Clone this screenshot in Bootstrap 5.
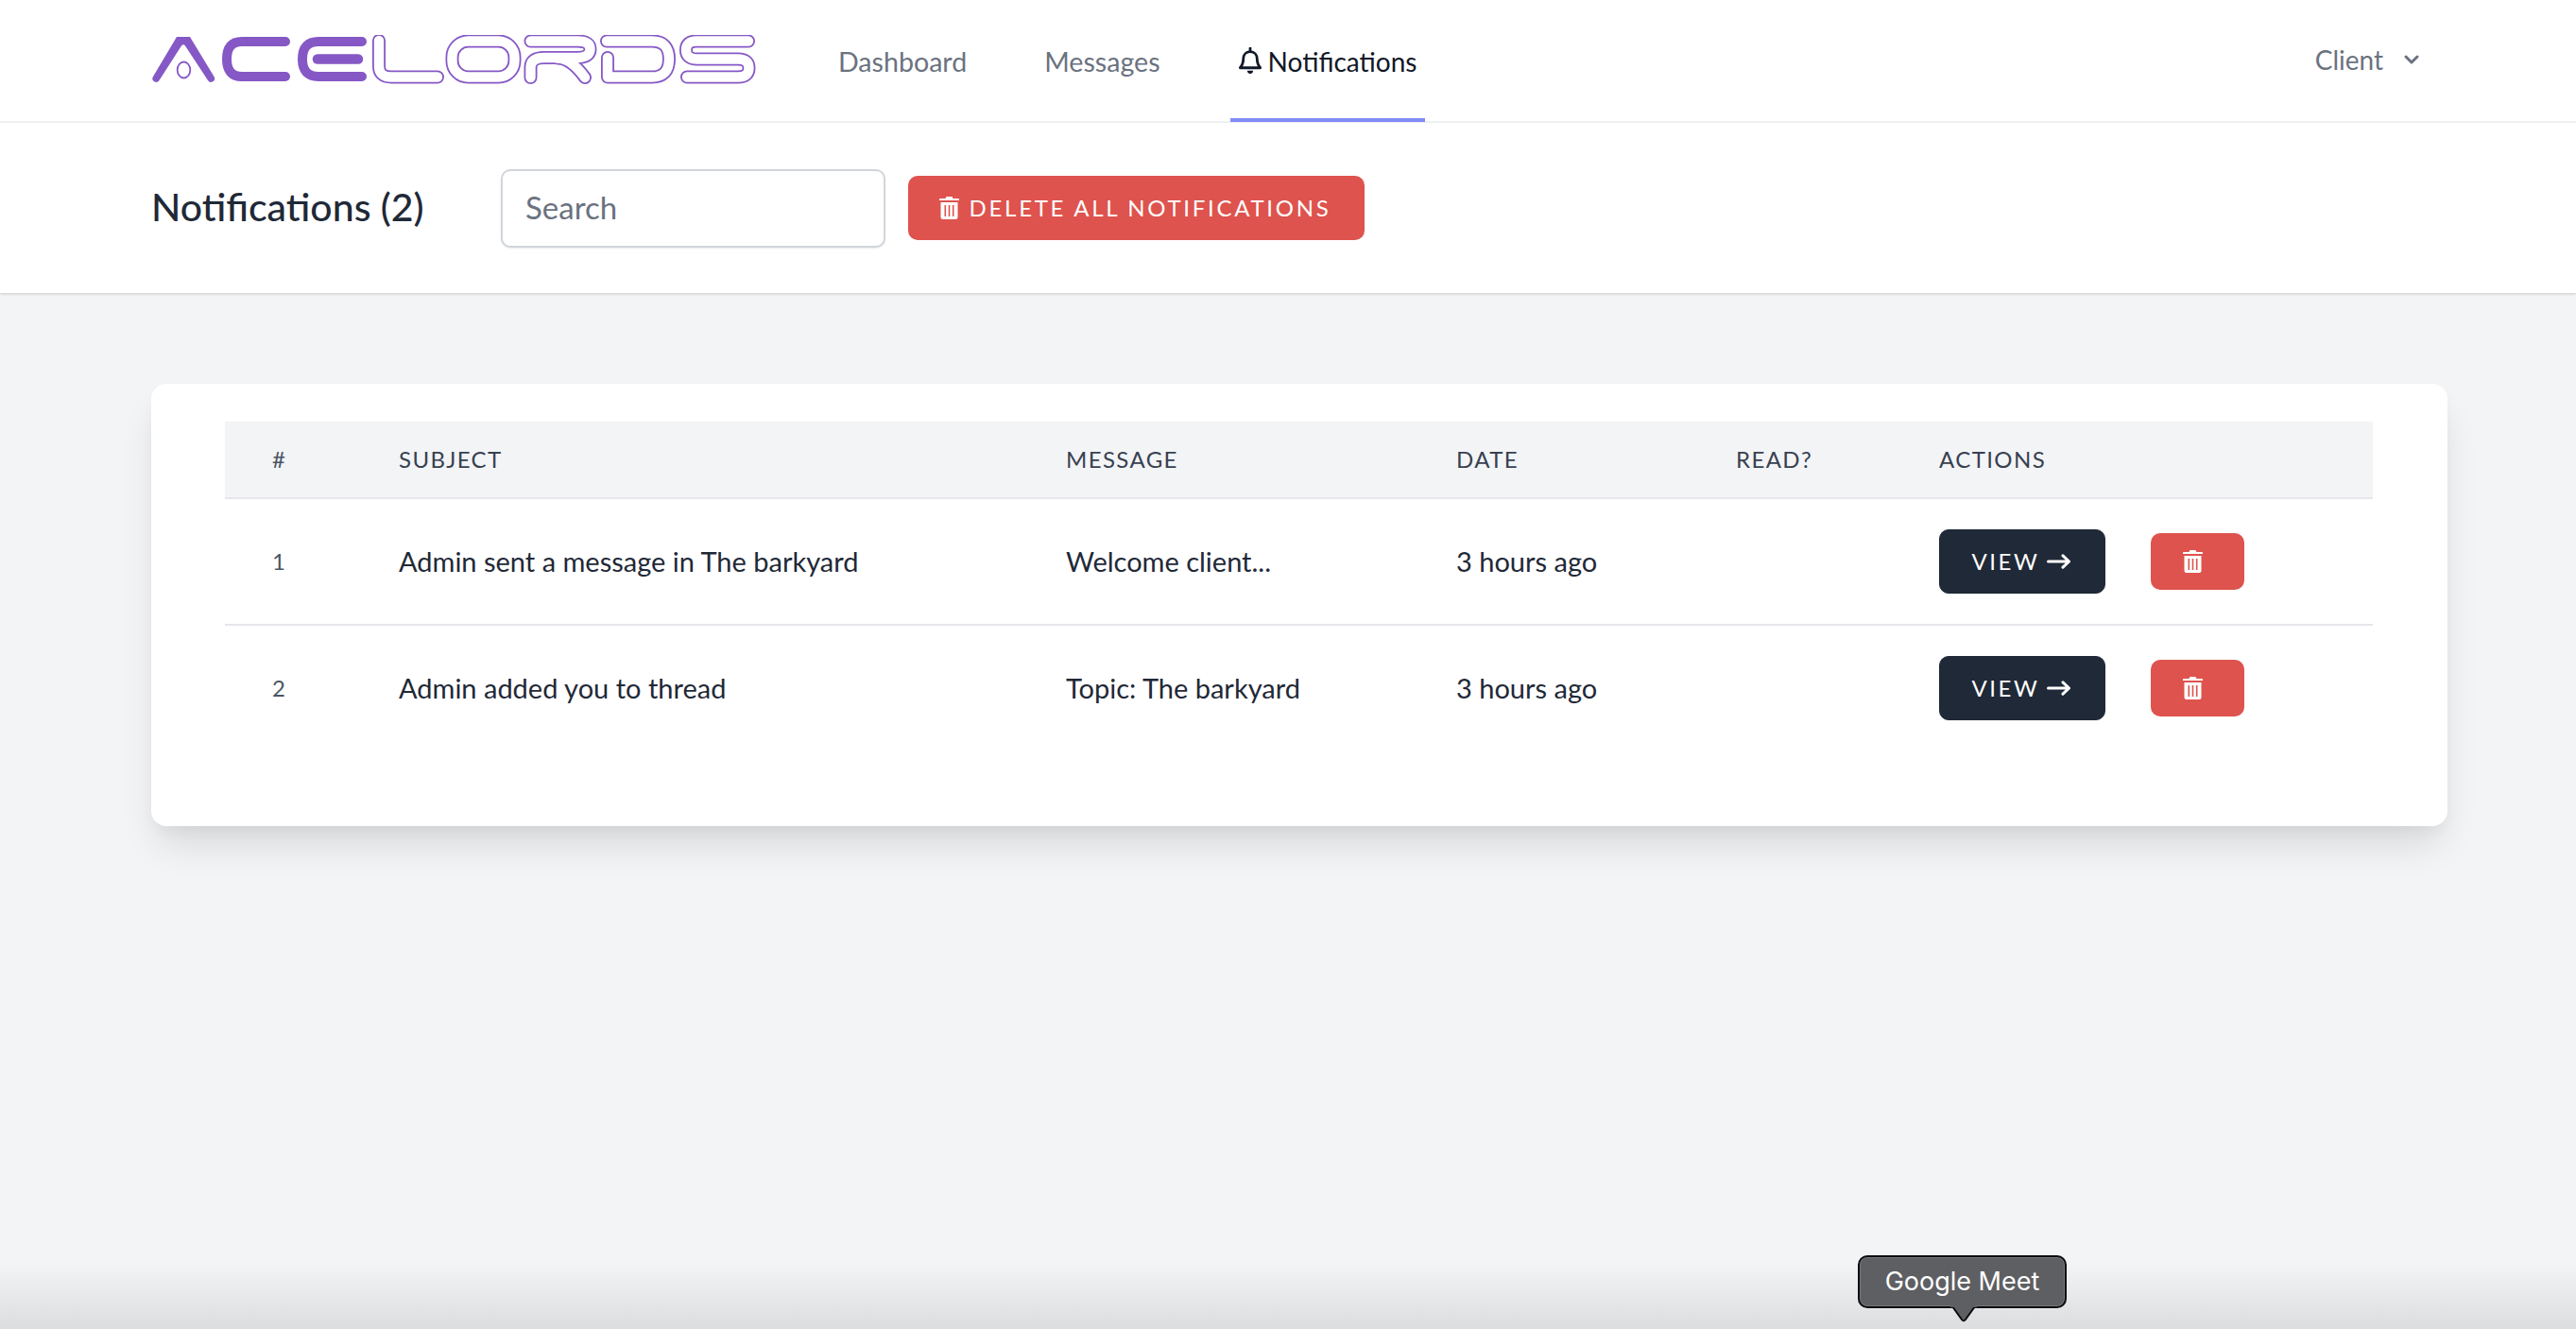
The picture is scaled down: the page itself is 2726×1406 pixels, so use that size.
<!DOCTYPE html>
<html lang="en">
<head>
  <meta charset="UTF-8" />
  <title>Notifications</title>
  <link href="https://cdn.jsdelivr.net/npm/bootstrap@5.3.3/dist/css/bootstrap.min.css" rel="stylesheet">
  <style>
    html, body { height: 100%; }
    body { background: #f3f4f6; font-family: "Lato", "Noto Sans", sans-serif; color: #1f2937; overflow: hidden; }
    .top-nav { height: 130px; background: #fff; border-bottom: 2px solid #f3f4f6; padding: 0 166px 0 160px; }
    .logo-svg { width: 640px; height: 52px; margin-top: -2px; margin-right: 79px; }
    .tab-item { height: 130px; padding: 2px 8px 0; margin-right: 66px; font-size: 28.6px; color: #6b7280; text-decoration: none; }
    .tab-item.tab-on { font-size: 28px; color: #111827; border-bottom: 4px solid #818cf8; margin-right: 0; margin-left: 0; gap: 6px; padding: 5px 0 0; width: 206px; justify-content: center; }
    .client-menu { font-size: 28px; color: #6b7280; gap: 22px; margin-top: -3px; }
    .head-bar { height: 180px; background: #fff; padding-left: 160px; box-shadow: 0 1px 3px rgba(0,0,0,.18); position: relative; }
    .head-title { font-size: 41px; font-weight: 500; color: #1f2937; width: 370px; margin: -3px 0 0; }
    .head-search { width: 407px; height: 83px; font-size: 33px; padding: 0 24px 3px; border: 2px solid #d1d5db; border-radius: 10px; color: #6b7280; box-shadow: 0 1px 2px rgba(0,0,0,.08); }
    .head-search::placeholder { color: #6b7280; }
    .btn-wipe { width: 483px; height: 68px; margin-left: 24px; padding: 0 3px 0 0; background: #de534d; border: 0; border-radius: 10px; color: #fff; font-size: 24px; letter-spacing: 2.7px; gap: 11px; }
    .btn-wipe:hover, .btn-del:hover { background: #de534d; color: #fff; }
    .sheet { margin: 96px 136px 0 160px; height: 468px; background: #fff; border-radius: 16px; padding: 40px 79px 0 78px; box-shadow: 0 25px 40px -8px rgba(0,0,0,.12), 0 8px 16px -5px rgba(0,0,0,.05); }
    .notif-table { table-layout: fixed; width: 100%; margin: 0; --bs-table-border-color: #e5e7eb; }
    .notif-table th { height: 81px; background: #f3f4f6; font-size: 24px; font-weight: 400; letter-spacing: 1.4px; color: #374151; padding: 0; vertical-align: middle; border-bottom: 2px solid #e5e7eb; }
    .notif-table td { height: 134px; font-size: 29px; color: #1f2937; padding: 0; vertical-align: middle; border-bottom: 2px solid #e5e7eb; }
    .notif-table tr:last-child td { height: 132px; border-bottom: 0; }
    .notif-table .cell-num { padding-left: 50px; font-size: 24px; color: #4b5563; }
    .w-num { width: 184px; } .w-subj { width: 706px; } .w-msg { width: 413px; } .w-date { width: 296px; } .w-read { width: 215px; }
    .row-actions { gap: 48px; }
    .btn-open { width: 176px; height: 68px; background: #1f2937; border: 1px solid #1f2937; border-radius: 10px; color: #fff; font-size: 24px; letter-spacing: 2.6px; gap: 7px; padding: 0 3px 0 0; }
    .btn-open:hover { background: #1f2937; color: #fff; }
    .btn-del { width: 99px; height: 60px; background: #de534d; border: 0; border-radius: 10px; padding: 0 11px 0 0; }
    .dock-fade { position: absolute; left: 0; right: 0; bottom: 0; height: 70px; background: linear-gradient(to bottom, rgba(220,221,223,0), #dcdddf); }
    .dock-tip { position: absolute; left: 1966px; top: 1328px; width: 221px; height: 56px; background: #5e5f63; border: 2px solid #0c0c0c; border-radius: 10px; color: #fff; font-family: "Inter", "Liberation Sans", sans-serif; font-size: 27px; box-shadow: inset 0 0 0 1px #77787c; }
    .dock-arrow { position: absolute; left: 2063px; top: 1380px; width: 30px; height: 20px; }
  </style>
</head>
<body>
  <nav class="top-nav d-flex align-items-center">
    <svg class="logo-svg flex-shrink-0" viewBox="160 38 640 52" role="img" aria-label="Acelords" fill="none" stroke-linecap="round" stroke-linejoin="round">
      <g stroke="#8658c6">
        <path fill="#8658c6" stroke="none" d="M187 40H201L226.500 82a3.500 3.500 0 0 1-6.500 4L196 49.500q-2-2.500-4 0L168.500 86a3.500 3.500 0 0 1-6.500-4z"/>
        <ellipse cx="194.500" cy="75" rx="6.800" ry="8.500" stroke-width="1.800"/>
        <path stroke-width="10" d="M302 45H256Q240 45 240 63.500Q240 82 256 82H302"/>
        <path stroke-width="10" d="M383 45H337Q320 45 320 63.500Q320 82 337 82H383"/>
        <path stroke-width="10.500" d="M336 63.500H379"/>
        <g stroke-width="14">
          <path d="M401 44V71Q401 82.500 414 82.500H463"/>
          <rect x="478.500" y="44.500" width="66" height="38" rx="17"/>
          <path d="M561.500 44.500H611Q624.500 44.500 624.500 53Q624.500 62 611 62H576Q561.500 62 561.500 72V83"/>
          <path d="M590 62.500Q604 62.500 619 83"/>
          <path d="M642 44.500H690Q708 44.500 708 63.500Q708 82.500 690 82.500H643V62"/>
          <path d="M792 44.500H737Q726 44.500 726 54Q726 63.500 738 63.500H781Q792.500 63.500 792.500 73Q792.500 82.500 781 82.500H727"/>
        </g>
      </g>
      <g stroke="#fff" stroke-width="10.400">
        <path d="M401 44V71Q401 82.500 414 82.500H463"/>
        <rect x="478.500" y="44.500" width="66" height="38" rx="17"/>
        <path d="M561.500 44.500H611Q624.500 44.500 624.500 53Q624.500 62 611 62H576Q561.500 62 561.500 72V83"/>
        <path d="M590 62.500Q604 62.500 619 83"/>
        <path d="M642 44.500H690Q708 44.500 708 63.500Q708 82.500 690 82.500H643V62"/>
        <path d="M792 44.500H737Q726 44.500 726 54Q726 63.500 738 63.500H781Q792.500 63.500 792.500 73Q792.500 82.500 781 82.500H727"/>
      </g>
    </svg>
    <a href="#" class="tab-item d-flex align-items-center">Dashboard</a>
    <a href="#" class="tab-item d-flex align-items-center">Messages</a>
    <a href="#" class="tab-item tab-on d-flex align-items-center">
      <svg width="26" height="29" viewBox="0 0 25 28" fill="none" stroke="#111827" stroke-width="2.700" stroke-linejoin="round"><path d="M12.500 4.500c-4.300 0-7 3.200-7 7.200 0 5-1.300 7-3.300 9.300h20.600c-2-2.300-3.300-4.300-3.300-9.300 0-4-2.700-7.200-7-7.200z"/><path d="M12.500 1v3" stroke-linecap="round"/><path d="M9.500 24a3 3 0 0 0 6 0z" fill="#111827" stroke="none"/></svg>
      Notifications
    </a>
    <div class="client-menu d-flex align-items-center ms-auto">
      <span>Client</span>
      <svg width="16" height="10" viewBox="0 0 16 10" fill="none" stroke="#6b7280" stroke-width="3" stroke-linecap="round" stroke-linejoin="round"><path d="M2 2l6 6 6-6"/></svg>
    </div>
  </nav>

  <header class="head-bar d-flex align-items-center">
    <h1 class="head-title">Notifications (2)</h1>
    <input class="form-control head-search" placeholder="Search">
    <button class="btn btn-wipe d-flex align-items-center justify-content-center">
      <svg width="21" height="24" viewBox="0 0 21 24"><use href="#trash-shape"/></svg>
      DELETE ALL NOTIFICATIONS
    </button>
  </header>

  <main class="sheet">
    <table class="table notif-table">
      <colgroup><col class="w-num"><col class="w-subj"><col class="w-msg"><col class="w-date"><col class="w-read"><col></colgroup>
      <thead>
        <tr><th class="cell-num">#</th><th>SUBJECT</th><th>MESSAGE</th><th>DATE</th><th>READ?</th><th>ACTIONS</th></tr>
      </thead>
      <tbody>
        <tr>
          <td class="cell-num">1</td>
          <td>Admin sent a message in The barkyard</td>
          <td>Welcome client...</td>
          <td>3 hours ago</td>
          <td></td>
          <td>
            <div class="row-actions d-flex align-items-center">
              <a href="#" class="btn btn-open d-flex align-items-center justify-content-center">VIEW
                <svg width="25" height="16" viewBox="0 0 25 16" fill="none" stroke="#fff" stroke-width="3" stroke-linecap="round" stroke-linejoin="round"><path d="M1.500 8h22M17 1.800 23.500 8 17 14.200"/></svg></a>
              <button class="btn btn-del d-flex align-items-center justify-content-center"><svg width="21" height="24" viewBox="0 0 21 24"><use href="#trash-shape"/></svg></button>
            </div>
          </td>
        </tr>
        <tr>
          <td class="cell-num">2</td>
          <td>Admin added you to thread</td>
          <td>Topic: The barkyard</td>
          <td>3 hours ago</td>
          <td></td>
          <td>
            <div class="row-actions d-flex align-items-center">
              <a href="#" class="btn btn-open d-flex align-items-center justify-content-center">VIEW
                <svg width="25" height="16" viewBox="0 0 25 16" fill="none" stroke="#fff" stroke-width="3" stroke-linecap="round" stroke-linejoin="round"><path d="M1.500 8h22M17 1.800 23.500 8 17 14.200"/></svg></a>
              <button class="btn btn-del d-flex align-items-center justify-content-center"><svg width="21" height="24" viewBox="0 0 21 24"><use href="#trash-shape"/></svg></button>
            </div>
          </td>
        </tr>
      </tbody>
    </table>
  </main>

  <div class="dock-fade"></div>
  <div class="dock-tip d-flex align-items-center justify-content-center">Google Meet</div>
  <svg class="dock-arrow" viewBox="0 0 30 20"><path d="M3 2h24l-10 14q-2 2.500-4 0z" fill="#5e5f63" stroke="#0c0c0c" stroke-width="2"/><path d="M1 0h28v3H1z" fill="#5e5f63"/></svg>

  <svg width="0" height="0" class="position-absolute">
    <symbol id="trash-shape" viewBox="0 0 21 24">
      <path fill="#fff" fill-rule="evenodd" d="M7.500 0h6l1 2H20a1 1 0 0 1 1 1v1H0V3a1 1 0 0 1 1-1h5.500zM1.500 6h18v15.500A2.500 2.500 0 0 1 17 24H4a2.500 2.500 0 0 1-2.500-2.500zM5.500 9v12h1.600V9zM9.700 9v12h1.600V9zM13.900 9v12h1.600V9z"/>
    </symbol>
  </svg>
  <script src="https://cdn.jsdelivr.net/npm/bootstrap@5.3.3/dist/js/bootstrap.bundle.min.js"></script>
</body>
</html>
